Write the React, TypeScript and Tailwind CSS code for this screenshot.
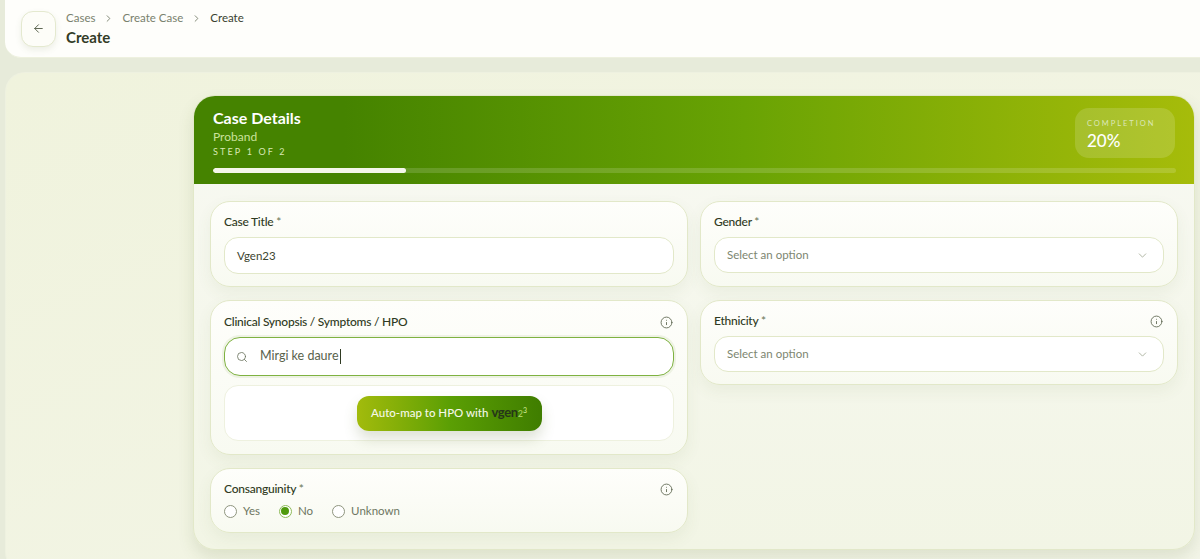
import { ArrowLeft, ChevronDown, ChevronRight, Info, Search } from "lucide-react";
import type { ReactNode } from "react";

const font = { fontFamily: 'Lato, "Noto Sans", sans-serif' };

function Label({ text, star, info }: { text: string; star?: boolean; info?: boolean }) {
  return (
    <div className="flex h-[18px] items-center justify-between pr-[1px]">
      <span className="text-[12px] font-medium leading-[18px] tracking-[-0.02em] text-[#2f3a22]">
        {text}
        {star && <span className="text-[#6f7a5c]"> *</span>}
      </span>
      {info && <Info className="h-[13px] w-[13px] text-[#5d6650]" strokeWidth={1.6} />}
    </div>
  );
}

function Card({ children, className }: { children: ReactNode; className: string }) {
  return (
    <div
      className={`rounded-[20px] border border-[#e2e8c9] bg-gradient-to-b from-[#fefefb] to-[#f8faf1] shadow-[0_6px_16px_rgba(90,110,50,0.07)] ${className}`}
    >
      {children}
    </div>
  );
}

function SelectBox() {
  return (
    <div className="flex h-[36px] items-center justify-between rounded-[14px] border border-[#e2e8c9] bg-white pl-[12px] pr-[14px]">
      <span className="text-[11.5px] text-[#7d8670]">Select an option</span>
      <ChevronDown className="h-[13px] w-[13px] text-[#a6ad98]" strokeWidth={1.6} />
    </div>
  );
}

function Radio({ label, checked }: { label: string; checked?: boolean }) {
  return (
    <div className="flex items-center gap-[6px]">
      <span
        className={`flex h-[13px] w-[13px] items-center justify-center rounded-full border ${
          checked ? "border-[#8fbb5a]" : "border-[#8f957f]"
        } bg-white`}
      >
        {checked && <span className="h-[8px] w-[8px] rounded-full bg-[#4f9a0c]" />}
      </span>
      <span className="text-[11.5px] leading-[16px] text-[#6d7661]">{label}</span>
    </div>
  );
}

export default function App() {
  return (
    <div className="h-[559px] w-[1200px] overflow-hidden bg-[#e7ebda]" style={font}>
      <header className="ml-[5px] flex h-[58px] items-center gap-[10px] rounded-bl-[16px] border-b border-[#eef1df] bg-[#fefefb] pl-[16px]">
        <button className="flex h-[36px] w-[35px] items-center justify-center rounded-[12px] border border-[#e4e9cf] bg-[#fdfdf8] shadow-[0_3px_6px_rgba(90,110,50,0.10)]">
          <ArrowLeft className="h-[13px] w-[13px] text-[#5c6550]" strokeWidth={1.8} />
        </button>
        <div className="flex flex-col">
          <div className="flex items-center text-[11.5px] leading-[16px] text-[#79816d]">
            <span>Cases</span>
            <ChevronRight className="mx-[8px] h-[11px] w-[11px]" />
            <span>Create Case</span>
            <ChevronRight className="mx-[8px] h-[11px] w-[11px]" />
            <span className="text-[#3a4230]">Create</span>
          </div>
          <h1 className="mt-[2px] text-[15px] font-bold leading-[19px] text-[#333c27]">Create</h1>
        </div>
      </header>

      <main className="ml-[5px] mt-[14px] flex h-[500px] justify-end rounded-l-[20px] border-l border-t border-[#eef1e0] bg-gradient-to-br from-[#f0f3dd] to-[#f3f5e8] pr-[5px] pt-[22px]">
        <section className="flex h-[455px] w-[1002px] flex-col overflow-hidden rounded-[22px] border border-[#e2e8c9] bg-gradient-to-b from-[#f8f9f3] to-[#f2f5e5] shadow-[0_8px_16px_rgba(80,100,40,0.13)]">
          <div className="flex h-[88px] shrink-0 flex-col bg-gradient-to-r from-[#458300] from-[15%] via-[#69a304] via-[55%] to-[#a6bc0a] pl-[19px] pr-[18px]">
            <div className="flex h-[72px] items-start justify-between">
              <div className="pt-[12px]">
                <h2 className="text-[16px] font-bold leading-[20px] text-white">Case Details</h2>
                <p className="mt-[1px] text-[12px] leading-[15px] text-[#cbe29c]">Proband</p>
                <p className="mt-[2px] text-[9px] leading-[12px] tracking-[0.24em] text-[#d8e8b3]">STEP 1 OF 2</p>
              </div>
              <div className="mr-[1px] mt-[12px] flex h-[50px] w-[100px] flex-col rounded-[14px] bg-white/15 pl-[12px] pt-[11px]">
                <span className="text-[7.5px] leading-[9px] tracking-[0.26em] text-[#dbe7b8]">COMPLETION</span>
                <span className="mt-[3px] text-[17px] font-medium leading-[20px] text-white">20%</span>
              </div>
            </div>
            <div className="h-[5px] w-full overflow-hidden rounded-full bg-white/15">
              <div className="h-full rounded-full bg-[#f4f6ea]" style={{ width: "20%" }} />
            </div>
          </div>

          <div className="grid grid-cols-[478px_478px] gap-x-[12px] pl-[16px] pt-[17px]">
            <div className="flex flex-col gap-[13px]">
              <Card className="h-[86px] px-[13px] pt-[11px]">
                <Label text="Case Title" star />
                <div className="mt-[6px] flex h-[37px] items-center rounded-[14px] border border-[#e2e8c9] bg-white px-[12px] text-[11.5px] text-[#3c4530]">
                  Vgen23
                </div>
              </Card>
              <Card className="h-[155px] px-[13px] pt-[12px]">
                <Label text="Clinical Synopsis / Symptoms / HPO" info />
                <div className="mt-[6px] flex h-[39px] items-center rounded-[16px] border-[1.5px] border-[#7fb241] bg-white pl-[11px] shadow-[0_0_0_2px_rgba(120,160,60,0.10)]">
                  <Search className="h-[12px] w-[12px] text-[#6d7661]" strokeWidth={1.7} />
                  <span className="ml-[12px] text-[12.5px] text-[#59624c]">Mirgi ke daure</span>
                  <span className="ml-[1px] h-[15px] w-px bg-[#2f3a22]" />
                </div>
                <div className="mt-[9px] flex h-[56px] items-center justify-center rounded-[14px] border border-[#eef1df] bg-white">
                  <button className="flex h-[35px] w-[185px] items-center justify-center rounded-[12px] bg-gradient-to-r from-[#a2bb0c] via-[#5b9f04] to-[#3f7d00] text-[11.5px] font-medium text-[#f5f8e8] shadow-[0_8px_14px_rgba(90,110,50,0.20)]">
                    <span>Auto-map to HPO with</span>
                    <span className="ml-[3px] text-[13px] font-bold tracking-[-0.03em] text-[#26361a]">vgen</span>
                    <span className="text-[9px] leading-none text-[#a8d060]">2</span>
                    <span className="-mt-[5px] text-[7px] leading-none text-[#c8e48a]">3</span>
                  </button>
                </div>
              </Card>
              <Card className="h-[65px] px-[13px] pt-[11px]">
                <Label text="Consanguinity" star info />
                <div className="mt-[5px] flex gap-[19px]">
                  <Radio label="Yes" />
                  <Radio label="No" checked />
                  <Radio label="Unknown" />
                </div>
              </Card>
            </div>
            <div className="flex flex-col gap-[13px]">
              <Card className="h-[86px] px-[13px] pt-[11px]">
                <Label text="Gender" star />
                <div className="mt-[6px]">
                  <SelectBox />
                </div>
              </Card>
              <Card className="h-[85px] px-[13px] pt-[11px]">
                <Label text="Ethnicity" star info />
                <div className="mt-[6px]">
                  <SelectBox />
                </div>
              </Card>
            </div>
          </div>
        </section>
      </main>
    </div>
  );
}
